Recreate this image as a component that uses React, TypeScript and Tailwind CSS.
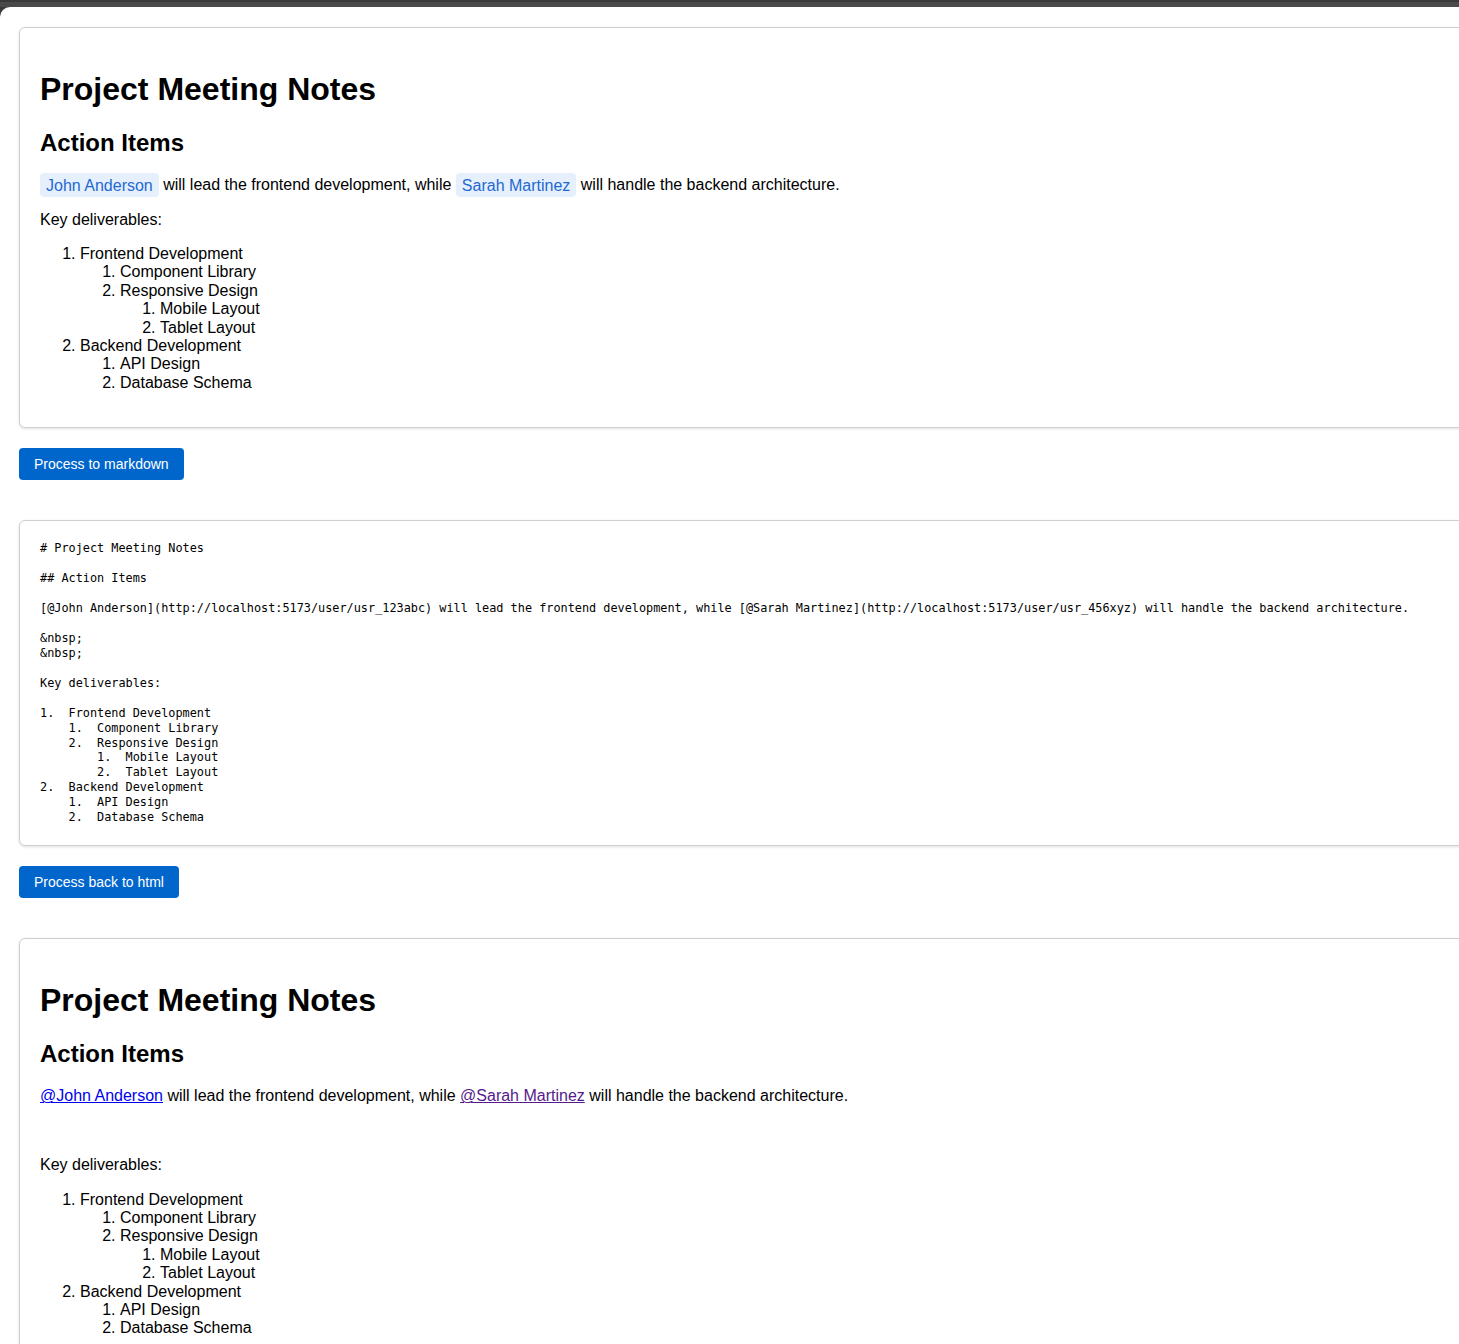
import { FC, ReactNode } from "react";

const markdown = `# Project Meeting Notes

## Action Items

[@John Anderson](http://localhost:5173/user/usr_123abc) will lead the frontend development, while [@Sarah Martinez](http://localhost:5173/user/usr_456xyz) will handle the backend architecture.

&nbsp;
&nbsp;

Key deliverables:

1.  Frontend Development
    1.  Component Library
    2.  Responsive Design
        1.  Mobile Layout
        2.  Tablet Layout
2.  Backend Development
    1.  API Design
    2.  Database Schema`;

const Card: FC<{ children: ReactNode }> = ({ children }) => (
  <div className="ml-[19px] w-[1480px] rounded-[6px] border border-[#cfcfcf] bg-white p-[20px] shadow-[0_1px_3px_rgba(0,0,0,0.12)]">
    {children}
  </div>
);

const Button: FC<{ label: string }> = ({ label }) => (
  <button className="ml-[19px] h-[32px] rounded-[4px] bg-[#0066cc] px-[15px] text-[14px] leading-none text-white">
    {label}
  </button>
);

const Chip: FC<{ name: string }> = ({ name }) => (
  <span className="rounded-[4px] bg-[#e6f0fc] px-[6px] py-[3.5px] text-[#1f69d0]">
    {name}
  </span>
);

const Deliverables: FC = () => (
  <ol className="mt-[16px] mb-[15px] list-decimal pl-[40px]">
    <li>
      Frontend Development
      <ol className="list-decimal pl-[40px]">
        <li>Component Library</li>
        <li>
          Responsive Design
          <ol className="list-decimal pl-[40px]">
            <li>Mobile Layout</li>
            <li>Tablet Layout</li>
          </ol>
        </li>
      </ol>
    </li>
    <li>
      Backend Development
      <ol className="list-decimal pl-[40px]">
        <li>API Design</li>
        <li>Database Schema</li>
      </ol>
    </li>
  </ol>
);

const Headings: FC = () => (
  <>
    <h1 className="mt-[23px] mb-[21.44px] text-[32px] font-bold">Project Meeting Notes</h1>
    <h2 className="mt-[19.92px] mb-[19.4px] text-[24px] font-bold">Action Items</h2>
  </>
);

export default function App() {
  return (
    <div className="h-screen overflow-hidden bg-[#3a3a3a] font-['Liberation_Sans',Arial,sans-serif] text-[16px] leading-[1.15] text-black">
      <div className="h-[7px] border-t-[2px] border-[#3a3a3a] bg-[#4a4a4a]" />
      <div className="h-full rounded-tl-[10px] bg-white pt-[20px]">
        <Card>
          <Headings />
          <p className="my-[16px]">
            <Chip name="John Anderson" /> will lead the frontend development, while{" "}
            <Chip name="Sarah Martinez" /> will handle the backend architecture.
          </p>
          <p className="my-[16px]">Key deliverables:</p>
          <Deliverables />
        </Card>

        <div className="mt-[20px]">
          <Button label="Process to markdown" />
        </div>

        <div className="mt-[40px]">
          <Card>
            <pre className="m-0 whitespace-pre font-['DejaVu_Sans_Mono',monospace] text-[11.85px] leading-[14.95px] text-black">
              {markdown}
            </pre>
          </Card>
        </div>

        <div className="mt-[20px]">
          <Button label="Process back to html" />
        </div>

        <div className="mt-[40px]">
          <Card>
            <Headings />
            <p className="my-[16px]">
              <a href="#" className="text-[#0000ee] underline">
                @John Anderson
              </a>{" "}
              will lead the frontend development, while{" "}
              <a href="#" className="text-[#551a8b] underline">
                @Sarah Martinez
              </a>{" "}
              will handle the backend architecture.
            </p>
            <p className="my-[16px]">{"\u00a0 \u00a0"}</p>
            <p className="my-[16px]">Key deliverables:</p>
            <Deliverables />
          </Card>
        </div>
      </div>
    </div>
  );
}
